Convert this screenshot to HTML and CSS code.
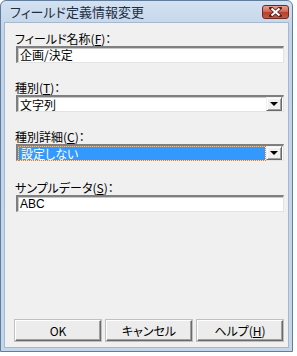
FILE: index.html
```html
<!DOCTYPE html>
<html>
<head>
    <title>フィールド定義情報変更</title>
    <meta charset="utf-8">
    <link rel="stylesheet" href="styles.css">
</head>
<body>
    <div class="window">
        <div class="titlebar">
            <span class="title">フィールド定義情報変更</span>
            <span class="close">
                <svg width="13" height="10" viewBox="0 0 13 10">
                    <path d="M2 1 L11 9 M11 1 L2 9" stroke="#5a2020" stroke-width="3.6" stroke-linecap="square"/>
                    <path d="M2.5 1.5 L10.5 8.5 M10.5 1.5 L2.5 8.5" stroke="#fff" stroke-width="2"/>
                </svg>
            </span>
        </div>
        <div class="client">
            <div class="field first">
                <div class="label">フィールド名称(<u>F</u>)：</div>
                <div class="textbox">企画/決定</div>
            </div>
            <div class="field">
                <div class="label">種別(<u>T</u>)：</div>
                <div class="combo">
                    <span class="combo-text">文字列</span>
                    <span class="drop"><span class="arrow"></span></span>
                </div>
            </div>
            <div class="field">
                <div class="label">種別詳細(<u>C</u>)：</div>
                <div class="combo">
                    <span class="combo-text selected">設定しない</span>
                    <span class="drop"><span class="arrow"></span></span>
                </div>
            </div>
            <div class="field last">
                <div class="label">サンプルデータ(<u>S</u>)：</div>
                <div class="textbox latin">ABC</div>
            </div>
            <div class="buttons">
                <button class="btn">OK</button>
                <button class="btn">キャンセル</button>
                <button class="btn">ヘルプ(<u>H</u>)</button>
            </div>
        </div>
    </div>
</body>
</html>
```

FILE: styles.css
```css
body {
    margin: 0;
    padding: 0;
    background: #fff;
    font-family: "Noto Sans CJK JP", "Noto Sans", sans-serif;
    font-size: 12px;
    color: #000;
}

.window {
    width: 293px;
    height: 352px;
    box-sizing: border-box;
    border: 1px solid #627d9c;
    border-radius: 6px 6px 0 0;
    padding: 0 3px 3px 3px;
    background: linear-gradient(#d3e1f1, #c2d4e9 30px, #c4d6ea);
    display: flex;
    flex-direction: column;
}

.titlebar {
    height: 21px;
    display: flex;
    align-items: flex-start;
    justify-content: space-between;
}

.title {
    margin: 3px 0 0 6px;
    font-size: 13px;
    line-height: 16px;
    color: #1e2e44;
    font-feature-settings: "palt";
}

.close {
    width: 27px;
    height: 14px;
    margin-top: 4px;
    box-sizing: border-box;
    border: 1px solid #6b2a22;
    border-radius: 3px;
    background: linear-gradient(#e6a193, #d06a57 45%, #b8402d 55%, #c45a44);
    display: flex;
    align-items: center;
    justify-content: center;
}

.client {
    flex: 1;
    box-sizing: border-box;
    border: 1px solid #a6b8cd;
    background: #f0f0f0;
    padding: 10px 5px 6px 10px;
    display: flex;
    flex-direction: column;
}

.field {
    margin-top: 19px;
}

.field.first {
    margin-top: 0;
}

.field.last {
    margin-top: 21px;
}

.label {
    height: 12px;
    line-height: 12px;
    margin-bottom: 1px;
    font-feature-settings: "palt";
    white-space: nowrap;
}

.textbox,
.combo {
    width: 268px;
    height: 17px;
    margin-left: 1px;
    box-sizing: border-box;
    border-top: 2px solid #7f7f7f;
    border-left: 2px solid #7f7f7f;
    border-right: 1px solid #e3e3e3;
    border-bottom: 1px solid #e3e3e3;
    background: #fff;
    box-shadow: inset 1px 1px 0 #c8c8c8;
}

.textbox {
    padding-left: 2px;
    line-height: 14px;
    font-feature-settings: "palt";
}

.textbox.latin {
    font-family: "Liberation Sans", Arial, sans-serif;
}

.combo {
    display: flex;
    align-items: center;
    padding: 0 1px 0 0;
}

.combo-text {
    flex: 1;
    height: 13px;
    line-height: 13px;
    padding-left: 2px;
    font-feature-settings: "palt";
}

.combo-text.selected {
    margin-left: 1px;
    margin-right: 1px;
    background: #3399ff;
    color: #fff;
    outline: 1px dotted #c08a50;
}

.drop {
    width: 16px;
    height: 14px;
    box-sizing: border-box;
    background: #f0f0f0;
    border-top: 1px solid #f0f0f0;
    border-left: 1px solid #f0f0f0;
    border-right: 1px solid #696969;
    border-bottom: 1px solid #696969;
    box-shadow: inset 1px 1px 0 #fff, inset -1px -1px 0 #a0a0a0;
    display: flex;
    align-items: center;
    justify-content: center;
}

.arrow {
    width: 0;
    height: 0;
    border-left: 4px solid transparent;
    border-right: 4px solid transparent;
    border-top: 4px solid #000;
}

.buttons {
    margin-top: auto;
    display: flex;
    justify-content: space-between;
}

.btn {
    width: 86px;
    height: 21px;
    padding: 0;
    box-sizing: border-box;
    font-family: "Noto Sans CJK JP", "Noto Sans", sans-serif;
    font-size: 12px;
    color: #000;
    background: #ececec;
    border-top: 1px solid #fff;
    border-left: 1px solid #fff;
    border-right: 1px solid #6a6a6a;
    border-bottom: 1px solid #6a6a6a;
    box-shadow: inset -1px -1px 0 #a0a0a0, 0 0 0 1px #c0c0c0;
    font-feature-settings: "palt";
}
```
